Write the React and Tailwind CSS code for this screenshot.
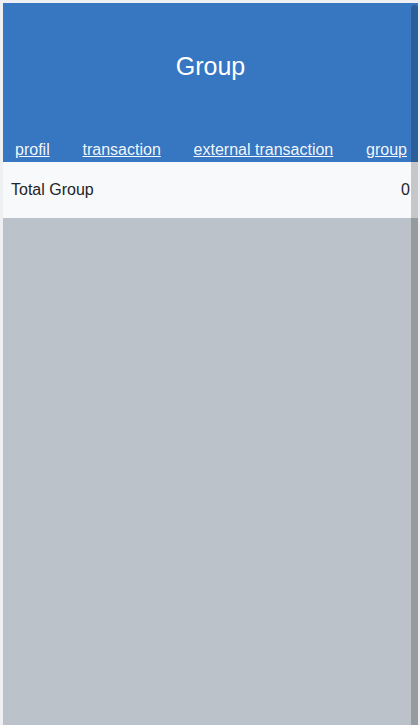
const links = ["profil", "transaction", "external transaction", "group"];

const App = () => {
  return (
    <div
      className="relative h-[725px] w-[420px] overflow-hidden bg-[#eef0f3] pt-[3px] pl-[3px] pr-[2px]"
      style={{ fontFamily: '"Liberation Sans", Arial, sans-serif' }}
    >
      <div className="flex h-full flex-col bg-[#bcc2c9]">
        {/* Header */}
        <div className="bg-[#3776c1] text-white">
          <div className="flex h-[127px] items-center justify-center text-[25px]">
            Group
          </div>
          <nav className="flex justify-between pl-3 pr-[11px] pt-[8px] text-[16px] leading-6">
            {links.map((l) => (
              <a key={l} href="#" className="underline text-white/95">
                {l}
              </a>
            ))}
          </nav>
        </div>

        {/* Summary row */}
        <div className="flex h-[56px] items-center justify-between bg-[#f8f9fa] px-2 text-[16px] text-[#212529]">
          <span>Total Group</span>
          <span>0</span>
        </div>

        <div className="flex-1" />
      </div>

      {/* scrollbar */}
      <div className="absolute left-[411px] top-[5px] bottom-0 w-[7px] rounded-t-full bg-black/20"></div>
    </div>
  );
};

export default App;
